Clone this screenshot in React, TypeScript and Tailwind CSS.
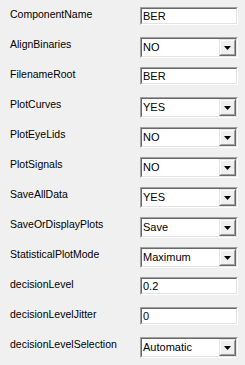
import React from "react";

type Field = { label: string; value: string; kind: "text" | "combo" };

const fields: Field[] = [
    { label: "ComponentName", value: "BER", kind: "text" },
    { label: "AlignBinaries", value: "NO", kind: "combo" },
    { label: "FilenameRoot", value: "BER", kind: "text" },
    { label: "PlotCurves", value: "YES", kind: "combo" },
    { label: "PlotEyeLids", value: "NO", kind: "combo" },
    { label: "PlotSignals", value: "NO", kind: "combo" },
    { label: "SaveAllData", value: "YES", kind: "combo" },
    { label: "SaveOrDisplayPlots", value: "Save", kind: "combo" },
    { label: "StatisticalPlotMode", value: "Maximum", kind: "combo" },
    { label: "decisionLevel", value: "0.2", kind: "text" },
    { label: "decisionLevelJitter", value: "0", kind: "text" },
    { label: "decisionLevelSelection", value: "Automatic", kind: "combo" },
];

// classic sunken 3d frame
const Sunken: React.FC<{ className: string; children: React.ReactNode }> = ({ className, children }) => (
    <div className={"border border-t-[#a0a0a0] border-l-[#a0a0a0] border-b-white border-r-white " + className}>
        <div className="h-full border border-t-[#696969] border-l-[#696969] border-b-[#e3e3e3] border-r-[#e3e3e3] bg-white flex">
            {children}
        </div>
    </div>
);

const TextBox: React.FC<{ value: string }> = ({ value }) => (
    <Sunken className="w-[98px] h-[18px]">
        <span className="pl-[1px] text-[11px] leading-[14px] text-black">{value}</span>
    </Sunken>
);

const ComboBox: React.FC<{ value: string }> = ({ value }) => (
    <Sunken className="w-[98px] h-[21px]">
        <span className="flex-1 pl-[1px] text-[11px] leading-[17px] text-black">{value}</span>
        <div className="w-[17px] h-[17px] border border-t-[#e3e3e3] border-l-[#e3e3e3] border-b-[#696969] border-r-[#696969] bg-[#f0f0f0]">
            <div className="h-full border border-t-white border-l-white border-b-[#a0a0a0] border-r-[#a0a0a0] flex items-center justify-center">
                <svg width="7" height="4" viewBox="0 0 7 4">
                    <path d="M0 0H7L3.5 4Z" fill="#000" />
                </svg>
            </div>
        </div>
    </Sunken>
);

const App: React.FC = () => {
    return (
        <div
            className="w-[245px] h-[365px] bg-[#f0f0f0] text-[10.5px] text-black overflow-hidden"
            style={{ fontFamily: '"Liberation Sans", Arial, sans-serif' }}
        >
            {fields.map((f) => (
                <div key={f.label} className="h-[30px] flex items-start">
                    <div className="w-[140px] pl-[10px] pt-[8px] leading-[12px]">{f.label}</div>
                    <div className="pt-[7px]">
                        {f.kind === "text" ? <TextBox value={f.value} /> : <ComboBox value={f.value} />}
                    </div>
                </div>
            ))}
        </div>
    );
};

export default App;
